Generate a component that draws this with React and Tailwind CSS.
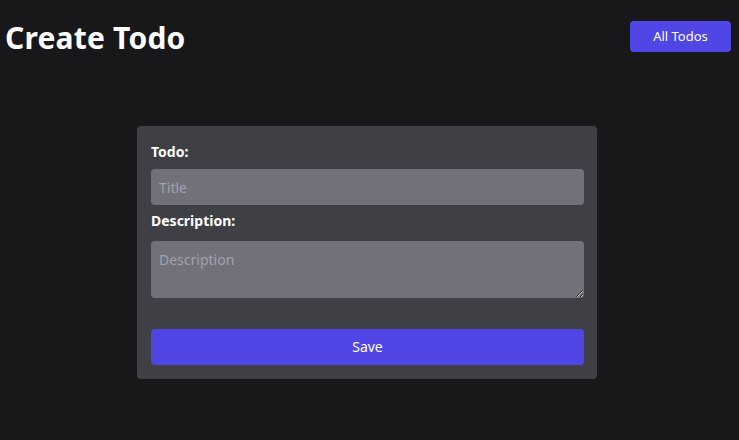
export default function App() {
  return (
    <div className="min-h-[440px] bg-[#18181b] text-white font-['Noto_Sans','Open_Sans',sans-serif]">
      <header className="flex items-start justify-between pl-[5px] pr-2 pt-5">
        <h1 className="text-[30px] font-bold leading-9 tracking-[0.2px]">Create Todo</h1>
        <button className="mt-[1px] h-[31px] w-[101px] rounded bg-[#4f46e5] text-[13px]">All Todos</button>
      </header>

      <div className="ml-[137px] mt-[70px] w-[460px] rounded bg-[#3f3f46] px-[14px] pb-[14px] pt-4">
        <label className="block text-sm font-bold leading-5">Todo:</label>
        <input
          placeholder="Title"
          className="mt-[7px] block h-9 w-[433px] rounded bg-[#71717a] px-2 text-sm text-white outline-none placeholder:text-[#a1a1aa]"
        />
        <label className="mt-[6px] block text-sm font-bold leading-5">Description:</label>
        <textarea
          placeholder="Description"
          className="mt-[10px] block h-[57px] w-[433px] rounded bg-[#71717a] px-2 pt-[9px] text-sm text-white outline-none placeholder:text-[#a1a1aa]"
        />
        <button className="mt-[31px] block h-9 w-[433px] rounded bg-[#4f46e5] text-sm">Save</button>
      </div>
    </div>
  )
}
